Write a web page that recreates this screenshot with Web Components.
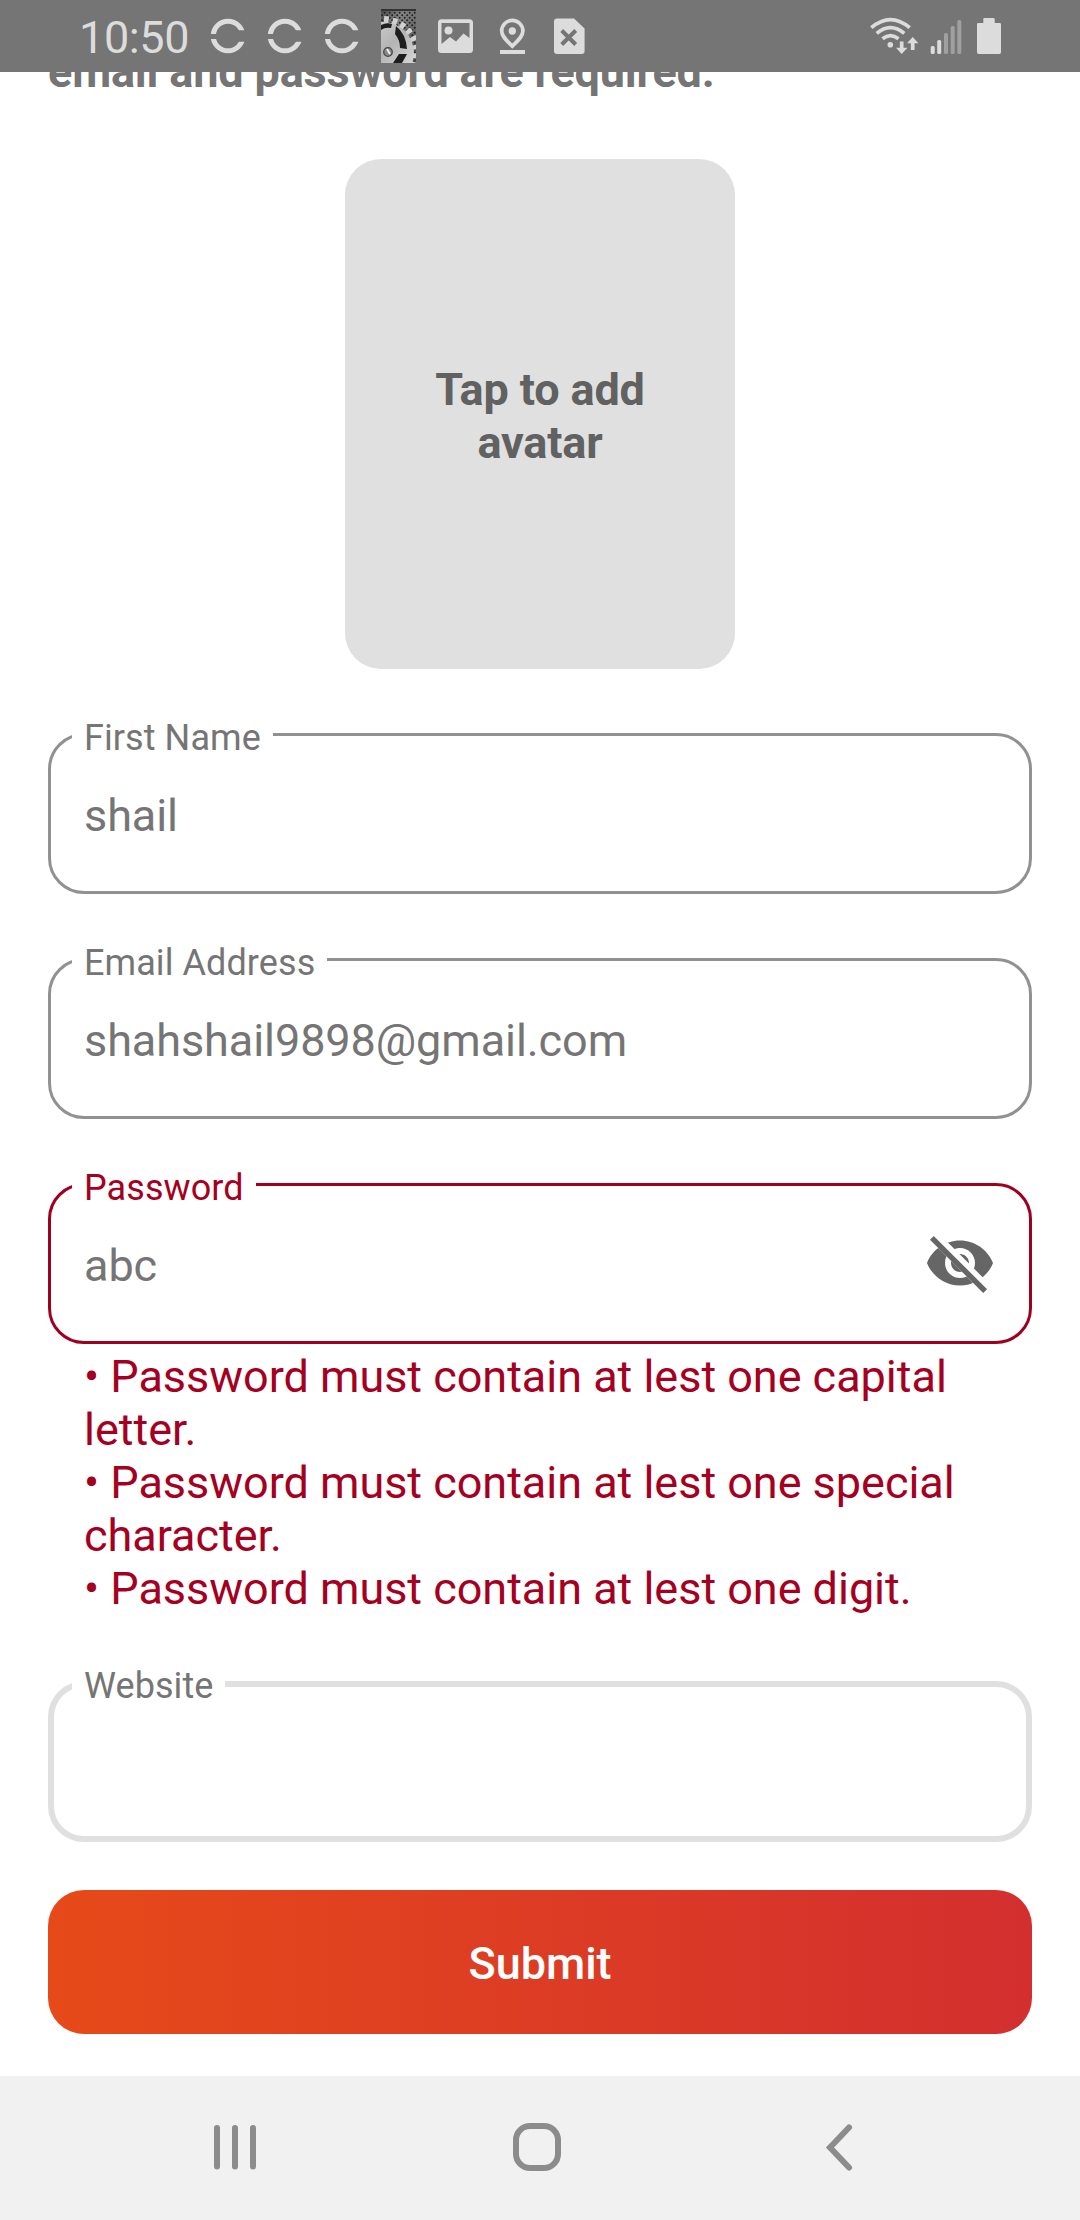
<!DOCTYPE html>
<html lang="en">
<head>
<meta charset="utf-8">
<title>Sign up</title>
<style>
html,body{margin:0;padding:0;background:#fff}
body{font-family:Roboto,"Liberation Sans",sans-serif}
</style>
</head>
<body>
<sign-up-screen></sign-up-screen>
<script>
const define = (name, html) => customElements.define(name, class extends HTMLElement {
  constructor() {
    super();
    const t = document.createElement('template');
    t.innerHTML = html;
    this.attachShadow({ mode: 'open' }).append(t.content.cloneNode(true));
  }
});

define('sync-icon', `<style>:host{display:block;width:36px;height:36px}svg{display:block}</style>
<svg width="36" height="36" viewBox="0 0 36 36" fill="none" stroke="#dcdcdc" stroke-width="5">
<clipPath id="u"><path d="M0 0H36V12.2H25L20 16H0z"/></clipPath><clipPath id="l"><path d="M0 21H20L25 23.7H36V36H0z"/></clipPath>
<circle cx="18" cy="18" r="14.8" clip-path="url(#u)"/><circle cx="18" cy="18" r="14.8" clip-path="url(#l)"/></svg>`);

define('gear-thumb', `<style>:host{display:block;width:35px;height:54px}svg{display:block}</style>
<svg width="35" height="54" viewBox="0 0 35 54">
<defs><linearGradient id="b" x2="1" y2="1"><stop offset="0" stop-color="#4a4a4a"/><stop offset=".35" stop-color="#858585"/><stop offset="1" stop-color="#444"/></linearGradient>
<linearGradient id="g" x2="1" y2="1"><stop offset="0" stop-color="#ddd"/><stop offset=".5" stop-color="#b4b4b4"/><stop offset="1" stop-color="#e6e6e6"/></linearGradient>
<pattern id="d" width="5" height="5" patternUnits="userSpaceOnUse"><circle cx="1.2" cy="1.2" r="1" fill="#222"/><circle cx="3.700" cy="3.700" r="1" fill="#222"/></pattern></defs>
<path fill="url(#b)" d="M0 0h35v54H0z"/><path fill="url(#d)" d="M0 0h35v54H0z"/><path d="M0 0h35v2H0z" fill="#333"/>
<circle cx="4" cy="42" r="34" transform="translate(-2.500 3)" fill="none" stroke="#d0d0d0" stroke-width="8" stroke-dasharray="4.500 4"/>
<circle cx="2" cy="44" r="31" fill="url(#g)"/>
<path fill="#1e1e1e" d="M0 16q6-3 11-1l-1 4q-6-1-10 2zM15 17q10 8 11 23l-7-1Q19 31 14 25zM18 45h8l-5 9h-9z"/>
<circle cx="7" cy="43" r="4.300" fill="#888" stroke="#444" stroke-width="1.200"/><path d="M6 40l3 5" stroke="#eee" stroke-width="2"/></svg>`);

define('status-bar', `<style>
:host{display:flex;position:relative;z-index:1;height:72px;background:#757575;color:#dcdcdc;justify-content:space-between;box-sizing:border-box;padding:0 79px 0 79px}
.l,.r{display:flex;align-items:flex-start}
time{font-size:45px;line-height:53px;margin-top:11px;width:131px;letter-spacing:-.4px}
sync-icon{margin-top:18px;margin-right:21px}
gear-thumb{margin-top:9px}
svg{display:block}
</style>
<div class="l"><time>10:50</time><sync-icon></sync-icon><sync-icon></sync-icon><sync-icon></sync-icon><gear-thumb></gear-thumb>
<svg width="180" height="72" viewBox="416 0 180 72" fill="#dcdcdc">
<path fill-rule="evenodd" d="M441.500 19.300h28a3.500 3.500 0 0 1 3.500 3.500v26.700a3.500 3.500 0 0 1-3.500 3.500h-28a3.500 3.500 0 0 1-3.500-3.500V22.800a3.500 3.500 0 0 1 3.500-3.500zM441.500 23v21l8.500-7 6 4.500 7.500-8 6 4.500V23z"/><circle cx="448.500" cy="30.500" r="4"/>
<path fill="none" stroke="#dcdcdc" stroke-width="3.700" d="M512.300 46.200C507 40.800 501.700 36.500 501.700 31a10.600 10.600 0 0 1 21.200 0C522.900 36.500 517.600 40.800 512.300 46.200z"/><circle cx="512.300" cy="31" r="3.700"/><path d="M500 50h25v4h-25z"/>
<path d="M557 18.400h17l10.600 10V51a3 3 0 0 1-3 3H557a3 3 0 0 1-3-3V21.400a3 3 0 0 1 3-3z"/><path d="M561.700 30.500l14 14M575.700 30.500l-14 14" stroke="#757575" stroke-width="4"/>
</svg></div>
<div class="r"><svg width="135" height="72" viewBox="866 0 135 72" fill="#dcdcdc">
<g fill="none" stroke="#dcdcdc" stroke-width="3.700"><path d="M871.300 27.700Q890.500 11.500 909.700 27.700M876.700 33.300Q890.500 21.800 904.300 33.300M882.500 38.800Q890.500 32.500 898.500 38.800"/><path d="M901.700 41.500v9.500M912.700 50V40"/></g>
<circle cx="890.300" cy="44.700" r="2.800"/><path d="M896 47.800h11.400L901.700 54zM907 43.300h11.400l-5.700-6.300z"/>
<rect x="930.700" y="46" width="4" height="8" rx="1.500"/><rect x="937.200" y="40" width="4" height="14" rx="1.500"/>
<g fill="#a0a0a0"><rect x="944" y="33" width="4" height="21" rx="1.500"/><rect x="950.700" y="26" width="4" height="28" rx="1.500"/><rect x="957.300" y="20" width="4" height="34" rx="1.500"/></g>
<path d="M984.500 18h9a1.200 1.200 0 0 1 1.200 1.200V23h5a1.300 1.300 0 0 1 1.300 1.300v28a1.700 1.700 0 0 1-1.700 1.700h-20.600a1.700 1.700 0 0 1-1.700-1.700v-28a1.300 1.300 0 0 1 1.300-1.300h5v-3.800a1.200 1.200 0 0 1 1.200-1.200z"/>
</svg></div>`);

define('avatar-picker', `<style>:host{display:flex;align-items:center;justify-content:center;align-self:center;width:390px;height:510px;box-sizing:border-box;padding:4px 60px 0;border-radius:36px;background:#e0e0e0;color:#616161;font-weight:700;font-size:45px;line-height:53px;text-align:center;letter-spacing:-.15px}</style><span><slot></slot></span>`);

define('text-field', `<style>
:host{display:grid;grid-template-columns:24px max-content 1fr;grid-template-rows:36px 1fr;height:161px;--c:#919191;--w:3px;color:#757575}
:host([error]){--c:#a00020}
:host([idle]){--c:#e0e0e0;--w:6px}
.frame{grid-area:1/1/3/4;box-sizing:border-box;border:var(--w) solid var(--c);border-radius:36px}
label{grid-area:1/2;height:42px;background:#fff;padding:0 12px;font-size:36px;line-height:42px;margin-top:-16px;letter-spacing:.08px;white-space:nowrap}
:host([error]) label{color:#a5001f}
.v{grid-area:1/1/3/4;display:flex;align-items:center;justify-content:space-between;padding:3px 36px 0;font-size:45px;line-height:53px;letter-spacing:-.08px}
</style><div class="frame"></div><label><slot name="label"></slot></label><div class="v"><slot></slot><slot name="end"></slot></div>`);

define('eye-off', `<style>:host{display:block;width:72px;height:72px;margin-top:-5px}svg{display:block}</style>
<svg width="72" height="72" viewBox="0 0 24 24" fill="#666"><clipPath id="c"><path d="M2 4.270L19.730 22 22.270 19.460 4.540 1.730V1H23V23H1V4.270z"/></clipPath>
<path clip-path="url(#c)" fill-rule="evenodd" d="M12 4.500C7 4.500 2.730 7.610 1 12c1.730 4.390 6 7.500 11 7.500s9.270-3.110 11-7.500c-1.730-4.390-6-7.500-11-7.500zM12 17c-2.760 0-5-2.240-5-5s2.240-5 5-5 5 2.240 5 5-2.240 5-5 5zM12 9c-1.660 0-3 1.340-3 3s1.340 3 3 3 3-1.340 3-3-1.340-3-3-3z"/>
<path d="M3.270 4.270L19.740 20.740" stroke="#666" stroke-width="1.800" stroke-linecap="square"/></svg>`);

define('error-list', `<style>:host{display:block;padding:0 30px 0 36px;color:#a5001f;font-size:45px;line-height:53px;letter-spacing:-.03px}</style><slot></slot>`);
define('error-line', `<style>:host{display:block}</style>• <slot></slot>`);
define('submit-button', `<style>:host{display:flex;align-items:center;justify-content:center;height:144px;border-radius:36px;background:linear-gradient(90deg,#e64a19,#d32f2f);color:#fff;font-weight:500;font-size:45px;line-height:53px;padding-top:3px;box-sizing:border-box}</style><slot></slot>`);

define('nav-bar', `<style>:host{display:flex;align-items:center;height:144px;background:#f1f1f1;box-sizing:border-box;padding:0 226px 2px 212px}svg{display:block}.home{margin:0 auto 0 254px}</style>
<svg width="46" height="50" viewBox="0 0 46 50" stroke="#8c8c8c" stroke-width="6" stroke-linecap="round"><path d="M5 6v38.500M23 6v38.500M41 6v38.500"/></svg>
<svg class="home" width="50" height="50" viewBox="0 0 50 50" fill="none" stroke="#8c8c8c" stroke-width="6"><rect x="4" y="4" width="42" height="42" rx="14"/></svg>
<svg width="30" height="50" viewBox="0 0 30 50" fill="none" stroke="#8c8c8c" stroke-width="6" stroke-linecap="round"><path d="M25 5.500L6 25.500 25 45.500"/></svg>`);

define('sign-up-screen', `<style>
:host{display:flex;flex-direction:column;height:2220px;overflow:hidden;background:#fff}
main{flex:1;display:flex;flex-direction:column;padding:0 48px;min-height:0}
p{margin:-27px 0 0;height:53px;font-size:45px;line-height:53px;font-weight:700;color:#757575;white-space:nowrap;letter-spacing:-.17px}
avatar-picker{margin-top:61px;margin-bottom:64px}
text-field.g{margin-bottom:64px}
error-list{margin-top:6px;margin-bottom:66px}
submit-button{margin-top:48px}
</style>
<status-bar></status-bar>
<main><p>email and password are required.</p>
<avatar-picker>Tap to add avatar</avatar-picker>
<text-field class="g"><span slot="label">First Name</span>shail</text-field>
<text-field class="g"><span slot="label">Email Address</span>shahshail9898@gmail.com</text-field>
<text-field error><span slot="label">Password</span>abc<eye-off slot="end"></eye-off></text-field>
<error-list><error-line>Password must contain at lest one capital letter.</error-line><error-line>Password must contain at lest one special character.</error-line><error-line>Password must contain at lest one digit.</error-line></error-list>
<text-field idle><span slot="label">Website</span></text-field>
<submit-button>Submit</submit-button></main>
<nav-bar></nav-bar>`);
</script>
</body>
</html>
